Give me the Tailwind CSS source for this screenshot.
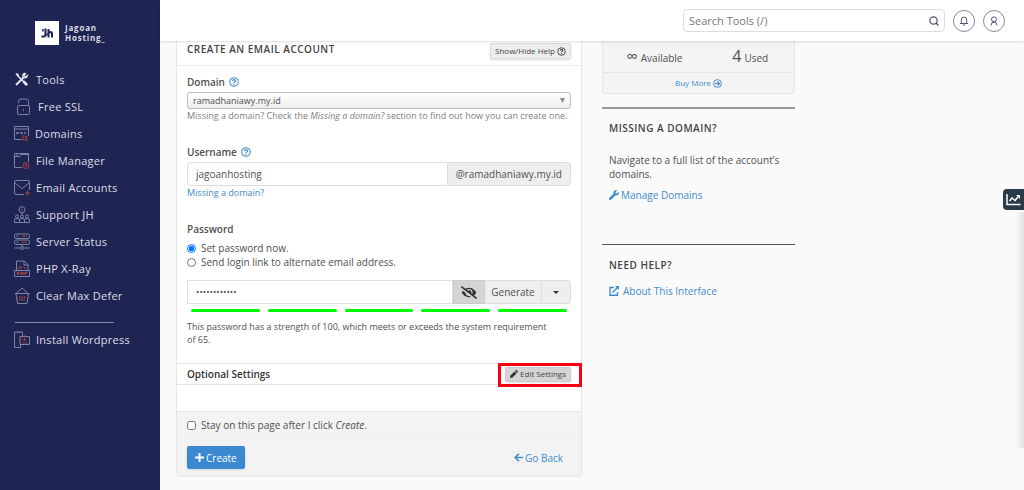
<!DOCTYPE html>
<html lang="en">
<head>
<meta charset="utf-8">
<meta name="viewport" content="width=device-width, initial-scale=1">
<title>Create an Email Account</title>
<script src="https://cdn.jsdelivr.net/npm/@tailwindcss/browser@4"></script>
</head>
<body class="flex min-h-screen overflow-x-hidden bg-[#fafafa] font-['Open_Sans','Noto_Sans',sans-serif] text-[10px] leading-[14px] text-[#505050]">
<svg class="hidden" aria-hidden="true">
  <symbol id="help" viewBox="0 0 16 16" fill="none" stroke="currentColor"><circle cx="8" cy="8" r="6.8" stroke-width="1.7"/><path d="M5.7 6.3C5.8 4.9 6.8 4.2 8 4.2c1.400 0 2.400.8 2.400 2 0 1.600-2.300 1.700-2.300 3.200" stroke-width="1.900"/><path d="M8.100 10.700v1.900" stroke-width="2"/></symbol>
</svg>

<aside class="min-h-screen w-40 shrink-0 bg-[#1f2552] text-[#dcdde8]">
  <a href="#" class="ml-[35px] mt-[21px] flex items-center gap-1.5" aria-label="Jagoan Hosting">
    <svg class="size-6" viewBox="0 0 24 24"><path fill="#fff" d="M0 0h24v24H0z"/><g fill="none" stroke="#1f2552" stroke-width="2"><path d="M6.500 15.500h2.200q1.800 0 1.800-2V7.500M13.500 8v8.500M13.500 12.500q.300-1.400 1.800-1.400 1.700 0 1.700 1.800v3.600"/><path d="M8 8v2.500M10.500 14.500l3-2" stroke-width="1.500"/></g></svg>
    <span class="text-[8px] font-bold leading-[10px] tracking-widest">Jagoan<br>Hosting_</span>
  </a>
  <nav class="mt-[21px] flex flex-col pl-[13px] text-[11px] font-medium tracking-wide">
    <a href="#" class="flex h-[27px] items-center gap-1.5"><svg class="size-[17px]" viewBox="0 0 17 17" fill="none" stroke="#e8e8f0"><path d="M4 4l10 10" stroke-width="1.500"/><path d="M10.500 10.500l3.500 3.500" stroke-width="2.600"/><path d="M3 14l8-8" stroke-width="2"/><path d="M14.500 4.500l-2 1.500-1.500-1.500 1.500-2c-2-.500-3.500 1.500-2.500 3.500 1 1.500 4 1.500 4.500-1.500z" stroke-width="1.200"/><path d="M2.800 3l2 .5.500 1.800" stroke-width="1.600"/></svg>Tools</a>
    <a href="#" class="flex h-[27px] items-center gap-2"><svg class="size-[17px]" viewBox="0 0 17 17" fill="none" stroke="#7d83a5"><rect x="4.500" y="7.500" width="12" height="9" rx="1"/><path d="M5.500 5V3.500Q5.500 1 8 1h5q2.500 0 2.500 2.500v4"/><path d="M10.500 10.500v3" stroke="#a4403c"/></svg>Free SSL</a>
    <a href="#" class="flex h-[27px] items-center gap-[5px]"><svg class="size-[17px]" viewBox="0 0 17 17" fill="none" stroke="#7d83a5"><path d="M9 14.500H1.500v-13h14V11M1.500 4h14"/><path d="M3 8h3M7 8h3M11 8h2" stroke-width="1.700"/><path d="M9.500 10.500l5 1.500-2 1 2 2.500-1 .5-2-2-1 1.500z" stroke="#a4403c"/></svg>Domains</a>
    <a href="#" class="flex h-[27px] items-center gap-1.5"><svg class="size-[17px]" viewBox="0 0 17 17" fill="none" stroke="#7d83a5"><path d="M9 15.500H1.500v-14h14V10M1.500 4.500h5l1-2h8M3 3h2"/><circle cx="13" cy="13.500" r="3" stroke="#a4403c"/><circle cx="13" cy="13.500" r="1" stroke="#a4403c"/></svg>File Manager</a>
    <a href="#" class="flex h-[27px] items-center gap-1.5"><svg class="size-[17px]" viewBox="0 0 17 17" fill="none" stroke="#7d83a5"><path d="M11 15.500H3q-1.500 0-1.500-1.500V3Q1.500 1.500 3 1.500h12q1.500 0 1.500 1.500v8M2 4l7 5.500L16 4"/><path d="M12 14h5M14.500 11.500v5" stroke="#a4403c"/></svg>Email Accounts</a>
    <a href="#" class="flex h-[27px] items-center gap-1.5"><svg class="size-[17px]" viewBox="0 0 17 17" fill="none" stroke="#7d83a5"><circle cx="9" cy="3.700" r="3"/><path d="M9 6.500V9"/><path d="M8 3.500h2" stroke="#a4403c"/><circle cx="4" cy="10.500" r="1.500"/><circle cx="9" cy="10.500" r="1.500"/><circle cx="14" cy="10.500" r="1.500"/><path d="M1.500 16.500V14q0-1.500 2.500-1.500T6.500 14v2.500zM6.500 16.500V14q0-1.500 2.500-1.500t2.500 1.500v2.500zM11.500 16.500V14q0-1.500 2.500-1.500t2.500 1.500v2.500z"/></svg>Support JH</a>
    <a href="#" class="flex h-[27px] items-center gap-1.5"><svg class="size-[17px]" viewBox="0 0 17 17" fill="none" stroke="#7d83a5"><rect x="1.500" y="1" width="15" height="4.500" rx="1.500"/><rect x="1.500" y="7" width="15" height="4.500" rx="1.500"/><path d="M3.500 3.200h2M3.500 9.200h2M9 11.500v2M1.500 15h5.500M11 15h5.500"/><path d="M9 3.200h5M9 9.200h5" stroke="#a4403c"/><circle cx="9" cy="15" r="1.500"/></svg>Server Status</a>
    <a href="#" class="flex h-[27px] items-center gap-1.5"><svg class="size-[17px]" viewBox="0 0 17 17" fill="none" stroke="#7d83a5"><path d="M3.500 10V1h8l3.500 3.500V10M11 1v4h4M3.500 10.500h-2v6h15v-6H3"/><path d="M5 9l2-2.500M8 9.500V6M10.500 6.500l2 2.500M4.500 15v-3h1.500v1.500H4.500M8 15v-3M8 13.500h2M10 12v3M12 15v-3h1.500v1.500H12" stroke="#b04a40"/></svg>PHP X-Ray</a>
    <a href="#" class="flex h-[27px] items-center gap-1.5"><svg class="size-[17px]" viewBox="0 0 17 17" fill="none" stroke="#7d83a5"><path d="M2 6.500h14.500M3 6.500l1.500 10h9.500l1.500-10M3.500 6L9 1l5.500 5"/><path d="M6.500 9l.5 4.500M9 8.500V14M11.500 9l-.5 4.500" stroke="#a4403c"/></svg>Clear Max Defer</a>
  </nav>
  <hr class="ml-[15px] mr-[46px] mt-[13px] border-[#8b8fa9]">
  <a href="#" class="ml-[13px] mt-[3px] flex h-[27px] items-center gap-1.5 text-[11px] font-medium tracking-wide"><svg class="size-[17px]" viewBox="0 0 17 17" fill="none" stroke="#7d83a5"><path d="M9.500 5V1h-8v15.500h6M4 1.500h3M7.500 16.500V13M7 5.500h9.500v8H7z"/><path d="M11.500 4v5.500M9.500 8l2 2 2-2M9.500 12h5M7 7.500v3" stroke="#a4403c"/></svg>Install Wordpress</a>
</aside>

<div class="flex min-w-0 grow flex-col">
  <header class="z-10 flex h-[41px] shrink-0 items-center justify-end gap-2 bg-white pr-[19px] shadow-sm">
    <label class="flex h-[23px] w-[262px] items-center rounded-sm border border-[#dcdce6] bg-white px-[5px]">
      <input type="text" aria-label="Search Tools" placeholder="Search Tools (/)" class="min-w-0 grow text-[11px] outline-none placeholder:text-[#777]">
      <svg class="size-[10px]" viewBox="0 0 10 10" fill="none" stroke="#4b5568" stroke-width="1.200"><circle cx="4.500" cy="4.500" r="3.700"/><path d="M7 7l2.500 2.500"/></svg>
    </label>
    <button aria-label="Notifications" class="flex size-[22px] items-center justify-center rounded-full border border-[#8688a8]"><svg class="size-[10px]" viewBox="0 0 10 10" fill="none" stroke="#50557d"><path d="M1 7.500h8M2.300 7V4Q2.300 1 5 1t2.700 3v3M4 9h2"/></svg></button>
    <button aria-label="Account" class="flex size-[22px] items-center justify-center rounded-full border border-[#8688a8]"><svg class="size-[10px]" viewBox="0 0 10 10" fill="none" stroke="#50557d"><circle cx="5" cy="3.300" r="2.500"/><path d="M2 9.500Q2.200 6 5 6t3 3.500"/></svg></button>
  </header>

  <main class="grid grid-cols-[406fr_193fr_209fr] items-start gap-5 pl-4">
    <form class="min-w-0 rounded-b-sm border border-t-0 border-[#e6e6e6] bg-white shadow-xs">
      <div class="flex h-[25px] items-start justify-between border-b border-[#ececec] px-2.5">
        <h2 class="mt-px font-semibold tracking-wider text-[#444]">CREATE AN EMAIL ACCOUNT</h2>
        <button type="button" class="mt-[2px] flex h-4 items-center gap-[2px] rounded-xs border border-[#ddd] bg-[#ededed] px-1 text-[8px] text-[#444] shadow">Show/Hide Help<svg class="size-[9px]"><use href="#help"/></svg></button>
      </div>
      <div class="px-2.5">
        <div class="flex h-[26px] items-end gap-1 pb-[3px] font-semibold"><label for="domain">Domain</label><svg class="mb-[2px] size-[10px] text-[#428bca]"><use href="#help"/></svg></div>
        <div class="relative">
          <select id="domain" class="block h-[17px] w-full appearance-none rounded-[3px] border border-[#bbb] bg-linear-to-b from-white to-[#eee] px-[5px] text-[9px] leading-[14px]"><option>ramadhaniawy.my.id</option></select>
          <svg class="pointer-events-none absolute right-1.5 top-1.5 size-[5px]" viewBox="0 0 5 5" fill="#888"><path d="M0 0h5L2.500 5z"/></svg>
        </div>
        <p class="text-[9px] text-[#808080]">Missing a domain? Check the <i>Missing a domain?</i> section to find out how you can create one.</p>
        <div class="mt-[22px] flex items-center gap-1 font-semibold"><label for="user">Username</label><svg class="size-[10px] text-[#428bca]"><use href="#help"/></svg></div>
        <div class="mt-[3px] flex h-6">
          <input id="user" type="text" value="jagoanhosting" class="min-w-0 grow rounded-l-sm border border-[#ddd] px-2">
          <span class="flex items-center rounded-r-sm border border-l-0 border-[#ddd] bg-[#eee] px-2">@ramadhaniawy.my.id</span>
        </div>
        <a href="#" class="block text-[9px] text-[#428bca]">Missing a domain?</a>
        <fieldset class="mt-[22px]">
          <legend class="font-semibold">Password</legend>
          <label class="mt-[5px] flex items-center gap-[5px]"><input type="radio" name="pw" checked class="size-[9px] accent-[#0075ff]">Set password now.</label>
          <label class="flex items-center gap-[5px]"><input type="radio" name="pw" class="size-[9px]">Send login link to alternate email address.</label>
        </fieldset>
        <div class="mt-[11px] flex h-6">
          <input type="password" aria-label="Password" value="abcdefghijkl" class="min-w-0 grow border border-[#ddd] px-2 text-[9px]">
          <button type="button" aria-label="Show password" class="flex w-8 items-center justify-center border border-[#ccc] bg-[#d4d4d4]"><svg class="h-[13px] w-4" viewBox="0 0 640 512" fill="#333"><path d="M320 400c-75.850 0-137.250-58.710-142.900-133.110L72.200 185.820c-13.790 17.300-26.480 35.590-36.720 55.590a32.350 32.350 0 0 0 0 29.190C89.710 376.410 197.070 448 320 448c26.910 0 52.870-4 77.890-10.460L346 397.390a144.130 144.130 0 0 1-26 2.610zm313.820 58.100l-110.550-85.440a331.250 331.250 0 0 0 81.250-102.070 32.350 32.350 0 0 0 0-29.190C550.290 135.590 442.930 64 320 64a308.150 308.150 0 0 0-147.320 37.700L45.460 3.370A16 16 0 0 0 23 6.180L3.370 31.450A16 16 0 0 0 6.180 53.900l588.360 454.730a16 16 0 0 0 22.460-2.810l19.640-25.270a16 16 0 0 0-2.820-22.450zm-183.720-142l-39.300-30.380A94.750 94.750 0 0 0 416 256a94.760 94.760 0 0 0-121.310-92.210A47.650 47.650 0 0 1 304 192a46.640 46.640 0 0 1-1.540 10l-73.610-56.890A142.310 142.310 0 0 1 320 112a143.920 143.920 0 0 1 144 144c0 21.630-5.290 41.790-13.900 60.110z"/></svg></button>
          <button type="button" class="w-14 border-y border-[#ddd] bg-[#eee]">Generate</button>
          <button type="button" aria-label="Generator options" class="flex w-[30px] items-center justify-center rounded-r-sm border border-[#ddd] bg-[#eee]"><svg class="h-[3px] w-1.5" viewBox="0 0 6 3" fill="#333"><path d="M0 0h6L3 3z"/></svg></button>
        </div>
        <div class="mt-[5px] grid grid-cols-5 gap-2 px-1" aria-hidden="true">
          <span class="h-[3px] rounded-full bg-[#00f900]"></span><span class="h-[3px] rounded-full bg-[#00f900]"></span><span class="h-[3px] rounded-full bg-[#00f900]"></span><span class="h-[3px] rounded-full bg-[#00f900]"></span><span class="h-[3px] rounded-full bg-[#00f900]"></span>
        </div>
        <p class="mt-2 text-[9px] leading-[13px]">This password has a strength of 100, which meets or exceeds the system requirement<br>of 65.</p>
      </div>
      <div class="relative mt-[17px] flex h-[22px] items-center justify-between border-y border-[#e4e4e4] px-2.5">
        <h3 class="font-semibold text-[#333]">Optional Settings</h3>
        <button type="button" class="flex h-[15px] items-center gap-[2px] rounded-xs border border-[#ccc] bg-[#d4d4d4] px-1 text-[8px] text-[#444] shadow"><svg class="size-2" viewBox="0 0 16 16" fill="#333"><path d="M0 16l1-5L9 3l4 4-8 8zM10 2l1.500-1.500q1-1 2 0l2 2q1 1 0 2L14 6z"/></svg>Edit Settings</button>
        <span class="pointer-events-none absolute -right-px -top-px h-6 w-[84px] border-[3px] border-[#fb0012]"></span>
      </div>
      <div class="mt-[26px] border-t border-[#e2e2e2] bg-[#f3f3f3] px-2.5 pb-1.5">
        <label class="flex h-[27px] items-center gap-[5px] border-b border-[#eee]"><input type="checkbox" class="size-[9px]"><span>Stay on this page after I click <i>Create</i>.</span></label>
        <div class="mt-[7px] flex items-center justify-between pr-2">
          <button class="flex h-[23px] items-center gap-[2px] rounded-xs bg-[#3a89d0] px-2 text-white shadow"><svg class="size-[9px]" viewBox="0 0 9 9" stroke="#fff" stroke-width="2"><path d="M4.500 0v9M0 4.500h9"/></svg>Create</button>
          <a href="#" class="flex items-center gap-[2px] text-[#428bca]"><svg class="size-[9px]" viewBox="0 0 9 9" fill="none" stroke="currentColor" stroke-width="1.600"><path d="M5 .8L1.200 4.500 5 8.200M1 4.500h8"/></svg>Go Back</a>
        </div>
      </div>
    </form>

    <aside class="min-w-0">
      <section class="rounded-b-sm border border-t-0 border-[#e6e6e6] bg-[#f4f4f4]">
        <div class="grid h-8 grid-cols-2 items-center border-b border-[#e6e6e6]">
          <p class="flex items-baseline justify-end gap-[3px] pr-4"><span class="text-[16px]">∞</span> Available</p>
          <p class="flex items-baseline justify-center gap-[3px] pl-2"><span class="text-[16px]">4</span> Used</p>
        </div>
        <a href="#" class="flex h-5 items-center justify-center gap-[2px] text-[8px] text-[#428bca]">Buy More<svg class="size-[9px]" viewBox="0 0 9 9" fill="none" stroke="currentColor"><circle cx="4.500" cy="4.500" r="3.900"/><path d="M2 4.500h4.500M4.500 2.500l2 2-2 2" stroke-width="1.200"/></svg></a>
      </section>
      <section class="mt-[13px] border-t-2 border-[#999] px-[7px] pt-3">
        <h2 class="font-semibold tracking-wider text-[#444]">MISSING A DOMAIN?</h2>
        <p class="mt-[18px]">Navigate to a full list of the account’s domains.</p>
        <a href="#" class="mt-[7px] flex items-center gap-[2px] text-[#428bca]"><svg class="size-[10px]" viewBox="0 0 512 512" fill="currentColor"><path d="M507.730 109.100c-2.240-9.030-13.540-12.090-20.120-5.510l-74.360 74.360-67.880-11.310-11.310-67.880 74.360-74.360c6.620-6.620 3.430-17.900-5.660-20.160-47.380-11.740-99.550.910-136.580 37.930-39.640 39.640-50.550 97.100-34.050 147.200L18.740 402.760c-24.990 24.990-24.990 65.510 0 90.500 24.990 24.990 65.510 24.990 90.500 0l213.210-213.210c50.120 16.710 107.470 5.680 147.370-34.220 37.070-37.070 49.700-89.320 37.910-136.730z"/></svg>Manage Domains</a>
      </section>
      <section class="mt-[42px] border-t border-[#555] px-[7px] pt-[13px]">
        <h2 class="font-semibold tracking-wider text-[#444]">NEED HELP?</h2>
        <a href="#" class="mt-3 flex items-center gap-1 text-[#428bca]"><svg class="size-[10px]" viewBox="0 0 10 10" fill="none" stroke="currentColor" stroke-width="1.400"><path d="M5 1.500H1v7.800h7.500V6M3.500 6.500L8.500 1.500"/><path d="M6 0h4v4z" fill="currentColor" stroke="none"/></svg>About This Interface</a>
      </section>
    </aside>
  </main>
</div>
<div class="pointer-events-none absolute right-0 top-[212px] h-[236px] w-2 bg-linear-to-l from-black/10 to-transparent" aria-hidden="true"></div>
<button aria-label="Statistics" class="absolute right-0 top-[189px] flex h-[21px] w-[21px] items-center justify-center rounded-l-sm bg-[#293a4a]"><svg class="h-3 w-[15px]" viewBox="0 0 15 12" fill="none" stroke="#fff" stroke-width="1.500"><path d="M1 0v10.500h13.500M3.500 7l2.500-3 3 2.500 3-3.500"/><path d="M10 1h4v4z" fill="#fff" stroke="none"/></svg></button>
</body>
</html>
